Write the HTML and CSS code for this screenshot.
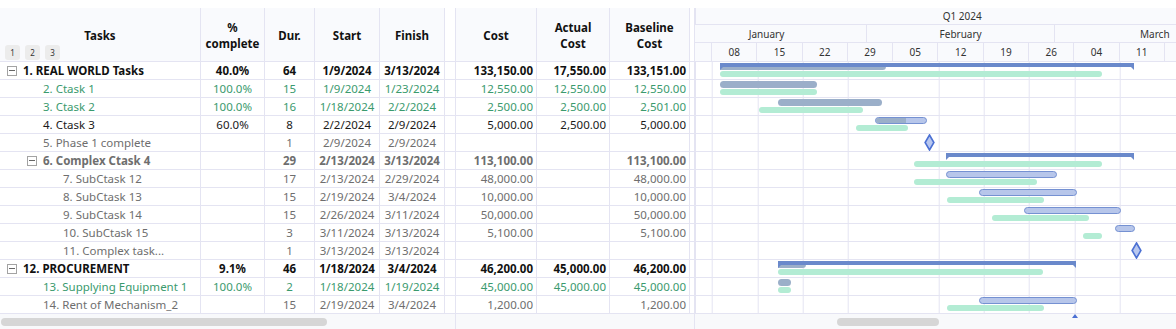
FILE: index.html
```html
<!DOCTYPE html>
<html lang="en">
<head>
    <meta charset="UTF-8">
    <title>Project Gantt</title>
    <link rel="stylesheet" href="styles.css">
</head>
<body>
<div class="top"></div>
<div class="board">

    <!-- Aufgaben -->
    <div class="pane pane-tasks">
        <div class="head">
            <div class="hcell c-task">Tasks
                <div class="levels"><span>1</span><span>2</span><span>3</span></div>
            </div>
            <div class="hcell c-pct">%<br>complete</div>
            <div class="hcell c-dur">Dur.</div>
            <div class="hcell c-start">Start</div>
            <div class="hcell c-fin">Finish</div>
            <div class="hcell fill"></div>
        </div>
        <div class="rows">
            <div class="row t-sum"><div class="cell c-task lv1"><span class="tog"></span>1. REAL WORLD Tasks</div><div class="cell c-pct ctr">40.0%</div><div class="cell c-dur ctr">64</div><div class="cell c-start ctr">1/9/2024</div><div class="cell c-fin ctr">3/13/2024</div><div class="cell fill"></div></div>
            <div class="row t-done"><div class="cell c-task lv2">2. Ctask 1</div><div class="cell c-pct ctr">100.0%</div><div class="cell c-dur ctr">15</div><div class="cell c-start ctr">1/9/2024</div><div class="cell c-fin ctr">1/23/2024</div><div class="cell fill"></div></div>
            <div class="row t-done"><div class="cell c-task lv2">3. Ctask 2</div><div class="cell c-pct ctr">100.0%</div><div class="cell c-dur ctr">16</div><div class="cell c-start ctr">1/18/2024</div><div class="cell c-fin ctr">2/2/2024</div><div class="cell fill"></div></div>
            <div class="row t-act"><div class="cell c-task lv2">4. Ctask 3</div><div class="cell c-pct ctr">60.0%</div><div class="cell c-dur ctr">8</div><div class="cell c-start ctr">2/2/2024</div><div class="cell c-fin ctr">2/9/2024</div><div class="cell fill"></div></div>
            <div class="row t-todo"><div class="cell c-task lv2">5. Phase 1 complete</div><div class="cell c-pct ctr"></div><div class="cell c-dur ctr">1</div><div class="cell c-start ctr">2/9/2024</div><div class="cell c-fin ctr">2/9/2024</div><div class="cell fill"></div></div>
            <div class="row t-sumtodo"><div class="cell c-task lv2b"><span class="tog"></span>6. Complex Ctask 4</div><div class="cell c-pct ctr"></div><div class="cell c-dur ctr">29</div><div class="cell c-start ctr">2/13/2024</div><div class="cell c-fin ctr">3/13/2024</div><div class="cell fill"></div></div>
            <div class="row t-todo"><div class="cell c-task lv3">7. SubCtask 12</div><div class="cell c-pct ctr"></div><div class="cell c-dur ctr">17</div><div class="cell c-start ctr">2/13/2024</div><div class="cell c-fin ctr">2/29/2024</div><div class="cell fill"></div></div>
            <div class="row t-todo"><div class="cell c-task lv3">8. SubCtask 13</div><div class="cell c-pct ctr"></div><div class="cell c-dur ctr">15</div><div class="cell c-start ctr">2/19/2024</div><div class="cell c-fin ctr">3/4/2024</div><div class="cell fill"></div></div>
            <div class="row t-todo"><div class="cell c-task lv3">9. SubCtask 14</div><div class="cell c-pct ctr"></div><div class="cell c-dur ctr">15</div><div class="cell c-start ctr">2/26/2024</div><div class="cell c-fin ctr">3/11/2024</div><div class="cell fill"></div></div>
            <div class="row t-todo"><div class="cell c-task lv3">10. SubCtask 15</div><div class="cell c-pct ctr"></div><div class="cell c-dur ctr">3</div><div class="cell c-start ctr">3/11/2024</div><div class="cell c-fin ctr">3/13/2024</div><div class="cell fill"></div></div>
            <div class="row t-todo"><div class="cell c-task lv3">11. Complex task...</div><div class="cell c-pct ctr"></div><div class="cell c-dur ctr">1</div><div class="cell c-start ctr">3/13/2024</div><div class="cell c-fin ctr">3/13/2024</div><div class="cell fill"></div></div>
            <div class="row t-sum"><div class="cell c-task lv1"><span class="tog"></span>12. PROCUREMENT</div><div class="cell c-pct ctr">9.1%</div><div class="cell c-dur ctr">46</div><div class="cell c-start ctr">1/18/2024</div><div class="cell c-fin ctr">3/4/2024</div><div class="cell fill"></div></div>
            <div class="row t-done"><div class="cell c-task lv2">13. Supplying Equipment 1</div><div class="cell c-pct ctr">100.0%</div><div class="cell c-dur ctr">2</div><div class="cell c-start ctr">1/18/2024</div><div class="cell c-fin ctr">1/19/2024</div><div class="cell fill"></div></div>
            <div class="row t-todo"><div class="cell c-task lv2">14. Rent of Mechanism_2</div><div class="cell c-pct ctr"></div><div class="cell c-dur ctr">15</div><div class="cell c-start ctr">2/19/2024</div><div class="cell c-fin ctr">3/4/2024</div><div class="cell fill"></div></div>
        </div>
        <div class="track"><div class="thumb thumb-tasks"></div></div>
    </div>

    <!-- Kosten -->
    <div class="pane pane-cost">
        <div class="head">
            <div class="hcell c-cost">Cost</div>
            <div class="hcell c-act">Actual<br>Cost</div>
            <div class="hcell c-base">Baseline<br>Cost</div>
            <div class="hcell fill"></div>
        </div>
        <div class="rows">
            <div class="row t-sum"><div class="cell c-cost num">133,150.00</div><div class="cell c-act num">17,550.00</div><div class="cell c-base num">133,151.00</div><div class="cell fill"></div></div>
            <div class="row t-done"><div class="cell c-cost num">12,550.00</div><div class="cell c-act num">12,550.00</div><div class="cell c-base num">12,550.00</div><div class="cell fill"></div></div>
            <div class="row t-done"><div class="cell c-cost num">2,500.00</div><div class="cell c-act num">2,500.00</div><div class="cell c-base num">2,501.00</div><div class="cell fill"></div></div>
            <div class="row t-act"><div class="cell c-cost num">5,000.00</div><div class="cell c-act num">2,500.00</div><div class="cell c-base num">5,000.00</div><div class="cell fill"></div></div>
            <div class="row t-todo"><div class="cell c-cost num"></div><div class="cell c-act num"></div><div class="cell c-base num"></div><div class="cell fill"></div></div>
            <div class="row t-sumtodo"><div class="cell c-cost num">113,100.00</div><div class="cell c-act num"></div><div class="cell c-base num">113,100.00</div><div class="cell fill"></div></div>
            <div class="row t-todo"><div class="cell c-cost num">48,000.00</div><div class="cell c-act num"></div><div class="cell c-base num">48,000.00</div><div class="cell fill"></div></div>
            <div class="row t-todo"><div class="cell c-cost num">10,000.00</div><div class="cell c-act num"></div><div class="cell c-base num">10,000.00</div><div class="cell fill"></div></div>
            <div class="row t-todo"><div class="cell c-cost num">50,000.00</div><div class="cell c-act num"></div><div class="cell c-base num">50,000.00</div><div class="cell fill"></div></div>
            <div class="row t-todo"><div class="cell c-cost num">5,100.00</div><div class="cell c-act num"></div><div class="cell c-base num">5,100.00</div><div class="cell fill"></div></div>
            <div class="row t-todo"><div class="cell c-cost num"></div><div class="cell c-act num"></div><div class="cell c-base num"></div><div class="cell fill"></div></div>
            <div class="row t-sum"><div class="cell c-cost num">46,200.00</div><div class="cell c-act num">45,000.00</div><div class="cell c-base num">46,200.00</div><div class="cell fill"></div></div>
            <div class="row t-done"><div class="cell c-cost num">45,000.00</div><div class="cell c-act num">45,000.00</div><div class="cell c-base num">45,000.00</div><div class="cell fill"></div></div>
            <div class="row t-todo"><div class="cell c-cost num">1,200.00</div><div class="cell c-act num"></div><div class="cell c-base num">1,200.00</div><div class="cell fill"></div></div>
        </div>
        <div class="track"></div>
    </div>

    <!-- Zeitachse -->
    <div class="pane pane-chart">
        <div class="chead">
            <div class="scale s-q"><div class="sc q1">Q1 2024</div></div>
            <div class="scale s-m">
                <div class="sc m-jan">January</div>
                <div class="sc m-feb">February</div>
                <div class="sc m-mar">March</div>
            </div>
            <div class="scale s-w">
                <div class="sc wk"></div><div class="sc wk">08</div><div class="sc wk">15</div><div class="sc wk">22</div>
                <div class="sc wk">29</div><div class="sc wk">05</div><div class="sc wk">12</div><div class="sc wk">19</div>
                <div class="sc wk">26</div><div class="sc wk">04</div><div class="sc wk">11</div><div class="sc wk"></div>
            </div>
        </div>
        <div class="crows">
            <div class="crow">
                <div class="sum-prog" style="left:24.3px;width:165.7px"></div>
                <div class="sum" style="left:24.3px;width:413.4px"></div>
                <div class="base" style="left:24px;width:382px"></div>
            </div>
            <div class="crow">
                <div class="bar done" style="left:24px;width:97px"></div>
                <div class="base" style="left:24px;width:97px"></div>
            </div>
            <div class="crow">
                <div class="bar done" style="left:82.3px;width:103.7px"></div>
                <div class="base" style="left:62.7px;width:104.3px"></div>
            </div>
            <div class="crow">
                <div class="bar todo" style="left:179.3px;width:51.7px"><div class="prog" style="width:60%"></div></div>
                <div class="base" style="left:160px;width:51.7px"></div>
            </div>
            <div class="crow">
                <svg class="ms" style="left:233px" viewBox="0 0 11 17"><polygon points="5.5,1 9.9,8.5 5.5,16 1.1,8.5"/></svg>
            </div>
            <div class="crow">
                <div class="sum" style="left:250.3px;width:187.4px"></div>
                <div class="base" style="left:217.7px;width:188.3px"></div>
            </div>
            <div class="crow">
                <div class="bar todo" style="left:250.3px;width:110.4px"></div>
                <div class="base" style="left:217.7px;width:123.3px"></div>
            </div>
            <div class="crow">
                <div class="bar todo" style="left:283.3px;width:97.4px"></div>
                <div class="base" style="left:251px;width:97px"></div>
            </div>
            <div class="crow">
                <div class="bar todo" style="left:328.3px;width:97px"></div>
                <div class="base" style="left:296px;width:97px"></div>
            </div>
            <div class="crow">
                <div class="bar todo" style="left:419.3px;width:19.4px"></div>
                <div class="base" style="left:387px;width:19.3px"></div>
            </div>
            <div class="crow">
                <svg class="ms" style="left:440px" viewBox="0 0 11 17"><polygon points="5.5,1 9.9,8.5 5.5,16 1.1,8.5"/></svg>
            </div>
            <div class="crow">
                <div class="sum-prog" style="left:82px;width:28px"></div>
                <div class="sum" style="left:82px;width:298px"></div>
                <div class="base" style="left:82px;width:265.3px"></div>
            </div>
            <div class="crow">
                <div class="bar done" style="left:82px;width:13px"></div>
                <div class="base" style="left:82px;width:13px"></div>
            </div>
            <div class="crow">
                <div class="bar todo" style="left:283.3px;width:97.4px"></div>
                <div class="base" style="left:251px;width:97px"></div>
            </div>
        </div>
        <div class="track">
            <div class="arrow" style="left:377px"></div>
            <div class="thumb thumb-chart"></div>
        </div>
    </div>
</div>
</body>
</html>
```

FILE: styles.css
```css
/* Gantt-Ansicht: Tabelle links, Zeitachse rechts */
:root {
    --line: #e4e4f2;
    --head-bg: #f9fafd;
    --green: #3a9a6e;
    --grey: #6e6e6e;
    --sum-blue: #6a89cb;
    --done: #9bafc9;
    --todo: #b7c6ea;
    --todo-border: #7591d2;
    --baseline: #b3ecd4;
}

* {
    margin: 0;
    padding: 0;
    box-sizing: border-box;
}

body {
    width: 1176px;
    height: 329px;
    overflow: hidden;
    background: #fff;
    color: #222;
    font-family: "Noto Sans", "Open Sans", sans-serif;
    font-size: 11.5px;
}

.top {
    height: 8px;
}

.board {
    display: flex;
    height: 321px;
}

.pane {
    display: flex;
    flex-direction: column;
    overflow: hidden;
    border-right: 1px solid var(--line);
}

.pane-tasks { width: 456px; }
.pane-cost { width: 239px; }
.pane-chart { flex: 1; border-right: none; }

/* Kopfzeile */
.head {
    display: flex;
    height: 54px;
    background: var(--head-bg);
    border-bottom: 1px solid var(--line);
}

.hcell {
    position: relative;
    display: flex;
    align-items: center;
    justify-content: center;
    padding-top: 2px;
    text-align: center;
    font-weight: 700;
    line-height: 16px;
    color: #111;
    border-right: 1px solid var(--line);
}

.hcell.fill,
.cell.fill {
    flex: 1;
    border-right: none;
}

.head .hcell.fill { background: #fff; }

.levels {
    position: absolute;
    left: 5px;
    bottom: 1px;
    display: flex;
    gap: 5px;
}

.levels span {
    width: 15px;
    height: 15px;
    border-radius: 3px;
    background: #ececec;
    font-size: 8px;
    font-weight: 400;
    line-height: 15px;
    color: #333;
}

.c-task { width: 201px; }
.c-pct { width: 64px; }
.c-dur { width: 50px; }
.c-start { width: 65px; }
.c-fin { width: 65px; }
.c-cost { width: 81px; }
.c-act { width: 73px; }
.c-base { width: 80px; }

/* Zeilen */
.row {
    display: flex;
    height: 18px;
    border-bottom: 1px solid var(--line);
}

.cell {
    line-height: 17px;
    white-space: nowrap;
    overflow: hidden;
    border-right: 1px solid var(--line);
}

.ctr { text-align: center; }
.num { text-align: right; padding-right: 3px; }

.lv1, .lv2b {
    display: flex;
    align-items: center;
}

.lv1 { padding-left: 7px; }
.lv2b { padding-left: 27px; }
.lv2 { padding-left: 43px; }
.lv3 { padding-left: 63px; }

.tog {
    position: relative;
    width: 10px;
    height: 10px;
    margin-right: 6px;
    border: 1px solid #a3a3a3;
    flex: none;
}

.tog::after {
    content: "";
    position: absolute;
    left: 1px;
    top: 3.5px;
    width: 6px;
    height: 1px;
    background: #666;
}

.t-sum { font-weight: 700; color: #111; }
.t-sumtodo { font-weight: 700; color: var(--grey); }
.t-done { color: var(--green); }
.t-act { color: #1a1a1a; }
.t-todo { color: var(--grey); }

/* Scrollleisten */
.track {
    position: relative;
    height: 15px;
    padding-top: 4px;
    background: #f8f9fb;
}

.thumb {
    height: 8px;
    border-radius: 4px;
    background: #d6d6d6;
}

.thumb-tasks { width: 326px; margin-left: 1px; }
.thumb-chart { width: 102px; margin-left: 142px; }

.arrow {
    position: absolute;
    top: 0;
    width: 0;
    height: 0;
    border-left: 3px solid transparent;
    border-right: 3px solid transparent;
    border-bottom: 4px solid #4b70d3;
}

/* Zeitachse */
.chead {
    display: flex;
    flex-direction: column;
    background: var(--head-bg);
    font-size: 10px;
    color: #333;
}

.scale {
    display: flex;
    margin-left: -28.3px;
    border-bottom: 1px solid var(--line);
}

.s-q { height: 17px; border-left: 1px solid var(--line); margin-left: 0; }
.s-m { height: 18px; }
.s-w { height: 19px; }

.sc {
    flex: none;
    display: flex;
    align-items: center;
    justify-content: center;
    border-right: 1px solid var(--line);
}

.q1 { width: 589px; margin-left: -28.3px; border-right: none; }
.m-jan { width: 200.6px; }
.m-feb { width: 187.7px; }
.m-mar { width: 200.6px; }
.wk { width: 45.3px; }

.crows {
    background-image: repeating-linear-gradient(to right, transparent 0 44.3px, var(--line) 44.3px 45.3px);
    background-position: -28.3px 0;
    border-left: 1px solid var(--line);
}

.crow {
    position: relative;
    height: 18px;
    border-bottom: 1px solid var(--line);
}

.bar {
    position: absolute;
    top: 1px;
    height: 7px;
    border-radius: 4px;
    overflow: hidden;
}

.bar.done { background: var(--done); }

.bar.todo {
    background: var(--todo);
    border: 1px solid var(--todo-border);
}

.bar .prog {
    height: 100%;
    background: var(--done);
}

.base {
    position: absolute;
    top: 9px;
    height: 5.5px;
    border-radius: 3px;
    background: var(--baseline);
}

.sum {
    position: absolute;
    top: 1px;
    height: 3.5px;
    background: var(--sum-blue);
}

.sum::before,
.sum::after {
    content: "";
    position: absolute;
    top: 3.5px;
    width: 0;
    height: 0;
    border-top: 3px solid var(--sum-blue);
}

.sum::before { left: 0; border-right: 3px solid transparent; }
.sum::after { right: 0; border-left: 3px solid transparent; }

.sum-prog {
    position: absolute;
    top: 1px;
    height: 7px;
    border-radius: 0 4px 4px 0;
    background: var(--done);
}

.ms {
    position: absolute;
    top: 0;
    width: 11px;
    height: 17px;
    margin-left: -5.5px;
}

.ms polygon {
    fill: #b8c7ef;
    stroke: #4b70d3;
    stroke-width: 1.6;
}
```
